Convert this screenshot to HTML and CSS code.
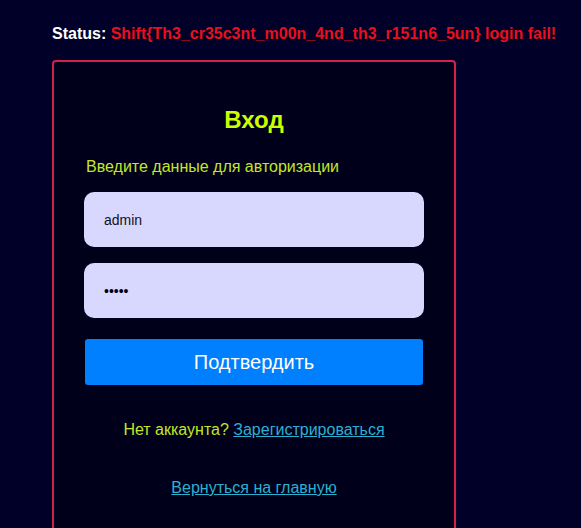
FILE: index.html
```html
<!DOCTYPE html>
<html lang="ru">
<head>
<meta charset="utf-8">
<link rel="stylesheet" href="styles.css">
</head>
<body>
<div class="page">
  <p class="status">Status: <span class="fail">Shift{Th3_cr35c3nt_m00n_4nd_th3_r151n6_5un} login fail!</span></p>
  <div class="card">
    <h2 class="title">Вход</h2>
    <p class="hint">Введите данные для авторизации</p>
    <div class="field">admin</div>
    <div class="field pass">•••••</div>
    <button class="submit">Подтвердить</button>
    <p class="reg">Нет аккаунта? <a href="#">Зарегистрироваться</a></p>
    <p class="back"><a href="#">Вернуться на главную</a></p>
  </div>
</div>
</body>
</html>
```
FILE: styles.css
```css
html, body {
  margin: 0;
  padding: 0;
  background: #000028;
  height: 100%;
  overflow: hidden;
}
body {
  font-family: "Liberation Sans", Arial, sans-serif;
}
.page {
  padding: 25px 0 0 52px;
}
.status {
  margin: 0;
  font-size: 16px;
  font-weight: bold;
  color: #ffffff;
  line-height: 18px;
}
.fail {
  color: #e8101c;
}
.card {
  margin-top: 17px;
  width: 340px;
  padding: 44px 30px 40px;
  border: 2px solid #d3204d;
  border-radius: 4px;
  background: #00001b;
  height: 600px;
}
.title {
  margin: 0;
  text-align: center;
  font-size: 24px;
  line-height: 28px;
  color: #ccff00;
}
.hint {
  margin: 24px 0 0 2px;
  font-size: 16px;
  line-height: 18px;
  color: #c4e626;
}
.field {
  margin-top: 16px;
  height: 55px;
  box-sizing: border-box;
  padding: 0 20px;
  display: flex;
  align-items: center;
  background: #d8d8ff;
  border-radius: 10px;
  font-size: 14px;
  color: #111122;
}
.field + .field {
  margin-top: 16px;
}
.pass {
  font-size: 14px;
  color: #000010;
}
.submit {
  display: block;
  margin: 21px 1px 0;
  width: 338px;
  height: 46px;
  border: none;
  border-radius: 3px;
  background: #007fff;
  color: #ffffff;
  font-family: "Liberation Sans", Arial, sans-serif;
  font-size: 20px;
}
.reg, .back {
  margin: 0;
  text-align: center;
  font-size: 16px;
  line-height: 18px;
  color: #c4e626;
}
.reg {
  margin-top: 36px;
}
.back {
  margin-top: 40px;
}
a {
  color: #2bb0d0;
  text-decoration: underline;
}
```
